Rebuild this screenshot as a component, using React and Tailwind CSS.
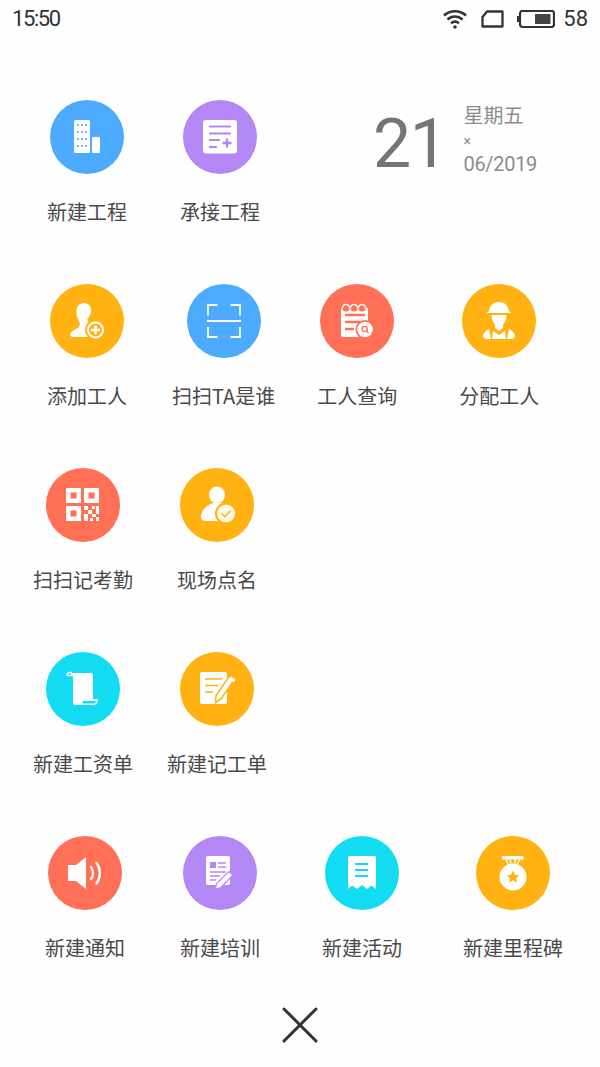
import React from 'react';

const CJK = "font-['Noto_Sans_CJK_SC','Noto_Sans',sans-serif]";

const Building = ({ c }) => (
  <>
    <rect x="24" y="20" width="16" height="33" rx="1.5" fill="#fff" />
    <rect x="42" y="37" width="8" height="16" rx="1" fill="#fff" />
    {[25, 32, 39, 46].map((y) =>
      [28, 32, 36].map((x) => <rect key={`${x}-${y}`} x={x - 0.9} y={y - 0.9} width="1.8" height="1.8" fill={c} />)
    )}
  </>
);

const DocPlus = ({ c }) => (
  <>
    <rect x="20" y="20" width="34" height="33.5" rx="3" fill="#fff" />
    <path d="M26 26.500h22M26 33.500h22M26 40h11M26 47h8" stroke={c} strokeWidth="2" />
    <path d="M44 38.500v9M39.500 43h9" stroke={c} strokeWidth="2.400" />
  </>
);

const PersonPlus = ({ c }) => (
  <>
    <path d="M34 19c5 0 7.500 4 7 8.500-.4 3.500-2 6-3.500 7.500-.8 1.500.5 3 3 4 2 .8 3.500 1.500 5 2.500L42 53H24c-3.500 0-5-2-3-4.500 2-2.400 6-4 8-5.500 1.200-1.500.9-4.500-.5-7C27 33.500 26.500 30 26.500 27.500 26.500 22.500 29.500 19 34 19z" fill="#fff" />
    <circle cx="45.500" cy="46" r="10.500" fill={c} />
    <circle cx="45.500" cy="46" r="7.500" fill="none" stroke="#fff" strokeWidth="2" />
    <path d="M45.500 41.500v9M41 46h9" stroke="#fff" strokeWidth="2.400" />
  </>
);

const Scan = () => (
  <path
    d="M30.500 21H21v10.500M43.500 21H53v10.500M21 43v10h9.500M53 43v10H43.500M20 37h34"
    fill="none"
    stroke="#fff"
    strokeWidth="1.800"
  />
);

const CalendarSearch = ({ c }) => (
  <>
    <path d="M21 24h1.500a3.500 3.500 0 0 0 7 0h1a3.500 3.500 0 0 0 7 0h1a3.500 3.500 0 0 0 7 0H48v27a2 2 0 0 1-2 2H23a2 2 0 0 1-2-2z" fill="#fff" />
    <path d="M22.500 24a3.500 3.500 0 0 1 7 0M30.500 24a3.500 3.500 0 0 1 7 0M38.500 24a3.500 3.500 0 0 1 7 0" fill="none" stroke="#fff" strokeWidth="1.600" />
    <path d="M25 31h20M25 38h18M25 45h9" stroke={c} strokeWidth="2.300" />
    <circle cx="45" cy="45.500" r="9.500" fill={c} />
    <circle cx="45" cy="45.500" r="7.800" fill="#fff" />
    <circle cx="44.600" cy="45" r="2.600" fill="none" stroke={c} strokeWidth="1.400" />
    <path d="M46.500 47l2 2" stroke={c} strokeWidth="1.500" />
  </>
);

const Worker = () => (
  <>
    <path d="M25 29c.3-1 1.500-1.500 2-2 .5-5 4-9 10-9s9.500 4 10 9c.6.500 1.700 1 2 2z" fill="#fff" />
    <path d="M29.500 31h15c0 5-2 8-3.500 9.500V44l-4 3-4-3v-3.500C31.500 39 29.500 36 29.500 31z" fill="#fff" />
    <path d="M27 45c-3 1.500-5.500 3.500-6 6.500-.2 2 1.500 3.500 3.500 3.500H29zM47 45c3 1.500 5.500 3.500 6 6.500.2 2-1.500 3.500-3.500 3.500H45zM31 47l6 4 6-4 1 8H30z" fill="#fff" />
  </>
);

const Qr = ({ c }) => (
  <>
    <rect x="20" y="20" width="15" height="15" fill="#fff" />
    <rect x="38" y="20" width="15" height="15" fill="#fff" />
    <rect x="20" y="38" width="15" height="15" fill="#fff" />
    <rect x="24.500" y="24.500" width="6" height="6" fill={c} />
    <rect x="42.500" y="24.500" width="6" height="6" fill={c} />
    <rect x="24.500" y="42.500" width="6" height="6" fill={c} />
    <path d="M38 38h4v4h-4zM46 38h3v3h-3zM50 38h3v8h-3zM42 42h4v4h-4zM38 46h4v7h-4zM46 46h4v3h-4zM44 50h3v3h-3zM50 49h3v4h-3z" fill="#fff" />
  </>
);

const PersonCheck = ({ c }) => (
  <>
    <ellipse cx="37" cy="27" rx="8" ry="8.500" fill="#fff" />
    <path d="M33 35h8c7 1 12 4 14 9L43 53H26c-4 0-5.500-2-5-5 .8-5.500 5-11 12-13z" fill="#fff" />
    <circle cx="46" cy="45.500" r="11" fill={c} />
    <circle cx="46" cy="45.500" r="9" fill="#fff" opacity="0.9" />
    <path d="M41.500 45.500l3.200 3.200 5.800-6" fill="none" stroke={c} strokeWidth="1.500" />
  </>
);

const Scroll = ({ c }) => (
  <>
    <path d="M25 21h20a2 2 0 0 1 2 2v24h5c0 3-1.500 6-4.500 6H29a2 2 0 0 1-2-2V26c0-2-.5-3-2-3v-2z" fill="#fff" />
    <path d="M26 20.500h-2.500c-1.500 0-2.500 1-2.500 3h5.500" fill="none" stroke="#fff" strokeWidth="1.300" />
    <path d="M37 49h13c-.3 1-1 2.500-2.500 2.500H36.500z" fill={c} />
  </>
);

const NotePencil = ({ c }) => (
  <>
    <path d="M22 20h23a2 2 0 0 1 2 2v28a2 2 0 0 1-2 2H22a2 2 0 0 1-2-2V22a2 2 0 0 1 2-2z" fill="#fff" />
    <path d="M25 27h17M25 33.500h13M25 40h8" stroke={c} strokeWidth="1.500" />
    <path d="M49.500 24l5 3.500L41 47l-5.500 3.500.5-7z" fill="#fff" stroke={c} strokeWidth="1.500" />
    <path d="M51 24.500l4.500 3.300-1.700 2.500-4.800-3.400z" fill="#fff" />
  </>
);

const Speaker = () => (
  <>
    <path d="M20 29h8l10-8v32l-10-8h-8z" fill="#fff" />
    <path d="M43 31c2.500 3.500 2.500 8.500 0 12" fill="none" stroke="#fff" strokeWidth="2.400" strokeLinecap="round" />
    <path d="M48.500 27c4.500 6 4.500 14 0 20.500" fill="none" stroke="#fff" strokeWidth="2.400" strokeLinecap="round" />
  </>
);

const ArticlePencil = ({ c }) => (
  <>
    <path d="M25 20h20a2 2 0 0 1 2 2v25a2 2 0 0 1-2 2H25a2 2 0 0 1-2-2V22a2 2 0 0 1 2-2z" fill="#fff" />
    <rect x="27" y="26" width="6" height="6" fill={c} />
    <path d="M35 27h8M35 31h8M27 36h16M27 40h10M27 44h6" stroke={c} strokeWidth="1.300" />
    <path d="M46 35.500l4 3.500-12 12.500-5.500 1.500 1-5.500z" fill="#fff" stroke={c} strokeWidth="1.200" />
  </>
);

const Receipt = ({ c }) => (
  <>
    <path d="M23 20h28v33l-4.500-3.500-4.500 3.500-5-4-5 4-5-3.500L23 53z" fill="#fff" />
    <path d="M30 28h13M30 34h13M30 40h13" stroke={c} strokeWidth="1.800" />
  </>
);

const Medal = ({ c }) => (
  <>
    <rect x="26" y="20" width="21.500" height="3.500" fill="#fff" />
    <path d="M30 23.500l2.500 5M43.500 23.500L41 28.500M34 23.500l1 4M39.500 23.500l-1 4" stroke="#fff" strokeWidth="1.300" />
    <circle cx="37" cy="41" r="13.500" fill="#fff" />
    <path d="M37 34.800l1.900 4 4.300.5-3.200 2.900.9 4.300-3.900-2.200-3.900 2.200.9-4.300-3.200-2.900 4.300-.5z" fill={c} />
  </>
);

const BLUE = '#4dabff';
const PURPLE = '#b388f4';
const ORANGE = '#ffb212';
const CORAL = '#ff7057';
const CYAN = '#12dbf2';

const rows = [
  {
    pl: 'pl-[47px]',
    items: [
      { label: '新建工程', color: BLUE, bg: 'bg-[#4dabff]', Icon: Building },
      { label: '承接工程', color: PURPLE, bg: 'bg-[#b388f4]', Icon: DocPlus, ml: 'ml-[53px]' },
    ],
  },
  {
    pl: 'pl-[47px]',
    items: [
      { label: '添加工人', color: ORANGE, bg: 'bg-[#ffb212]', Icon: PersonPlus },
      { label: '扫扫TA是谁', color: BLUE, bg: 'bg-[#4dabff]', Icon: Scan, ml: 'ml-[45px]' },
      { label: '工人查询', color: CORAL, bg: 'bg-[#ff7057]', Icon: CalendarSearch, ml: 'ml-[42px]' },
      { label: '分配工人', color: ORANGE, bg: 'bg-[#ffb212]', Icon: Worker, ml: 'ml-[62px]' },
    ],
  },
  {
    pl: 'pl-[33px]',
    items: [
      { label: '扫扫记考勤', color: CORAL, bg: 'bg-[#ff7057]', Icon: Qr },
      { label: '现场点名', color: ORANGE, bg: 'bg-[#ffb212]', Icon: PersonCheck, ml: 'ml-[44px]' },
    ],
  },
  {
    pl: 'pl-[33px]',
    items: [
      { label: '新建工资单', color: CYAN, bg: 'bg-[#12dbf2]', Icon: Scroll },
      { label: '新建记工单', color: ORANGE, bg: 'bg-[#ffb212]', Icon: NotePencil, ml: 'ml-[34px]' },
    ],
  },
  {
    pl: 'pl-[45px]',
    items: [
      { label: '新建通知', color: CORAL, bg: 'bg-[#ff7057]', Icon: Speaker },
      { label: '新建培训', color: PURPLE, bg: 'bg-[#b388f4]', Icon: ArticlePencil, ml: 'ml-[55px]' },
      { label: '新建活动', color: CYAN, bg: 'bg-[#12dbf2]', Icon: Receipt, ml: 'ml-[62px]' },
      { label: '新建里程碑', color: ORANGE, bg: 'bg-[#ffb212]', Icon: Medal, ml: 'ml-[61px]' },
    ],
  },
];

const Action = ({ item }) => (
  <div className={`flex flex-col items-center ${item.ml || ''}`}>
    <div className={`w-[74px] h-[74px] rounded-full ${item.bg}`}>
      <svg width="74" height="74" viewBox="0 0 74 74">
        <item.Icon c={item.color} />
      </svg>
    </div>
    <span className={`mt-[23px] h-[30px] text-[20px] leading-[30px] whitespace-nowrap text-[#4a4a4a] ${CJK}`}>{item.label}</span>
  </div>
);

const StatusBar = () => (
  <div className="h-[37px] flex items-center pl-[12px] pr-[12px] text-[#333] font-['Roboto',sans-serif] text-[22px]">
    <span className="tracking-[-1.4px]">15:50</span>
    <div className="ml-auto flex items-center">
      <svg width="24" height="20" viewBox="0 0 24 20" fill="none" stroke="#333" strokeWidth="2.500">
        <path d="M1 6.500C7 .8 17 .8 23 6.500" />
        <path d="M4.500 10.500c4.500-4 10.500-4 15 0" />
        <path d="M8 14.200c2.500-2 5.500-2 8 0" />
        <circle cx="12" cy="18" r="1.800" fill="#333" stroke="none" />
      </svg>
      <svg className="ml-[14px]" width="23" height="18" viewBox="0 0 23 18" fill="none" stroke="#333" strokeWidth="2.300">
        <path d="M6 1.500h15.500v15H1.500V7z" strokeLinejoin="round" />
      </svg>
      <svg className="ml-[13px]" width="38" height="18" viewBox="0 0 38 18" fill="none">
        <rect x="3" y="1" width="34" height="16" rx="2.500" stroke="#333" strokeWidth="2.200" />
        <rect x="0" y="6" width="2" height="6" fill="#333" />
        <rect x="18" y="4" width="15.500" height="10" fill="#444" />
      </svg>
      <span className="ml-[8px] text-[22px]">58</span>
    </div>
  </div>
);

const DateBlock = () => (
  <div className="ml-[113px] flex items-start font-['Roboto',sans-serif]">
    <span className="text-[68px] leading-none font-normal text-[#757575] mt-[10px] tracking-[-1.5px]">21</span>
    <div className="ml-[17px] flex flex-col text-[#8c8c8c]">
      <span className={`text-[20px] leading-[30px] ${CJK}`}>星期五</span>
      <span className="text-[14px] leading-[20px] mt-[1px]">×</span>
      <span className="text-[20px] leading-[28px] mt-[-1px] tracking-[-0.3px]">06/2019</span>
    </div>
  </div>
);

export default function App() {
  return (
    <div className="w-[600px] h-[1067px] bg-[#fefefe] overflow-hidden flex flex-col">
      <StatusBar />
      <div className="pt-[63px] flex flex-col gap-[57px]">
        {rows.map((row, idx) => (
          <div key={idx} className={`flex items-start h-[127px] ${row.pl}`}>
            {row.items.map((item) => (
              <Action key={item.label} item={item} />
            ))}
            {idx === 0 && <DateBlock />}
          </div>
        ))}
      </div>
      <div className="mt-[44px] flex justify-center">
        <svg width="36" height="36" viewBox="0 0 36 36" fill="none" stroke="#333" strokeWidth="3" strokeLinecap="round">
          <path d="M2 2l32 32M34 2L2 34" />
        </svg>
      </div>
    </div>
  );
}
